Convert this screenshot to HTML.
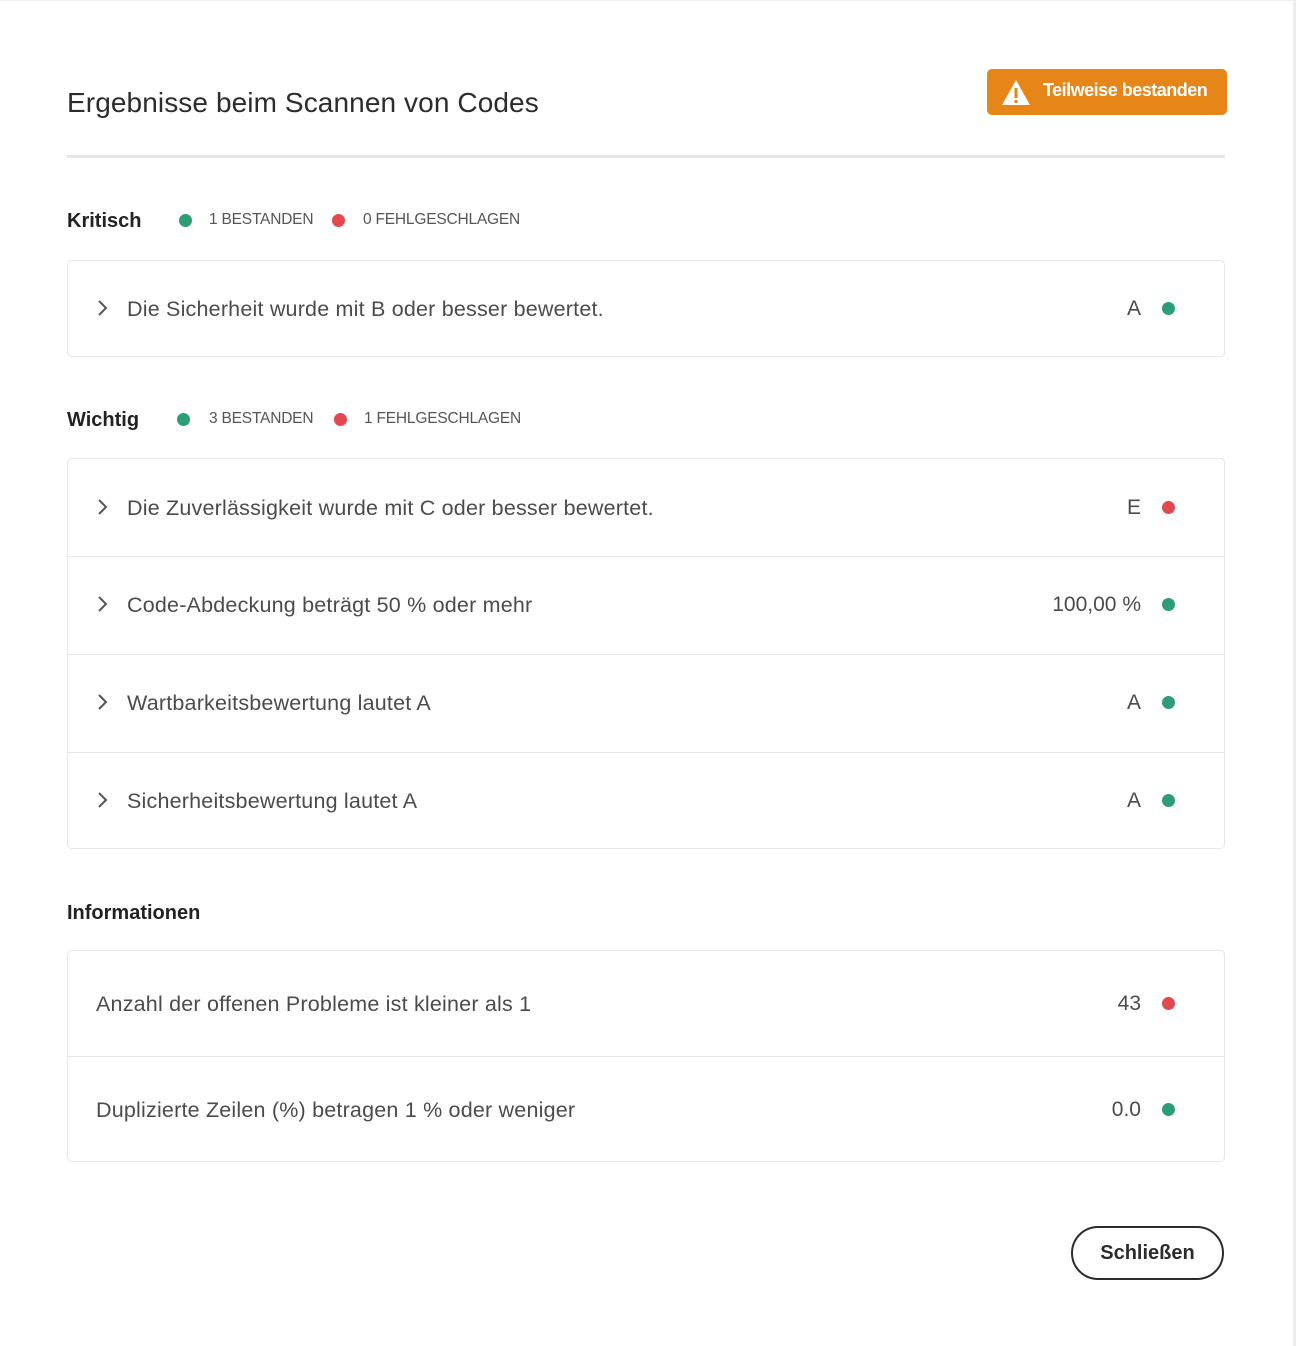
<!DOCTYPE html>
<html><head><meta charset="utf-8"><style>
*{margin:0;padding:0;box-sizing:border-box}
body{width:1296px;height:1346px;background:#fff;position:relative;overflow:hidden;font-family:"Liberation Sans",sans-serif;color:#4b4b4b}
.a{position:absolute}
.frame{position:absolute;left:0;top:0;width:1296px;height:1346px;border-right:3px solid #ececec;border-top:1px solid #f0f0f0}
.title{left:67px;top:87px;font-size:28px;color:#2c2c2c;white-space:nowrap;letter-spacing:0.1px}
.div{left:67px;top:155px;width:1158px;height:3px;background:#e6e6e6}
.badge{left:987px;top:69px;width:240px;height:46px;background:#e68619;border-radius:5px;color:#fff;font-weight:bold;font-size:18px;letter-spacing:-0.5px}
.h{font-size:20px;font-weight:bold;color:#222;white-space:nowrap}
.st{font-size:15.5px;color:#555;white-space:nowrap;letter-spacing:-0.2px}
.dot{position:absolute;width:13px;height:13px;border-radius:50%}
.g{background:#2d9d78}.r{background:#e34850}
.box{position:absolute;left:67px;width:1158px;border:1.5px solid #e6e6e6;border-radius:5px}
.row{position:relative;border-top:1.5px solid #e6e6e6}
.row:first-child{border-top:none}
.row .t{position:absolute;left:59px;font-size:21.5px;white-space:nowrap;color:#4b4b4b;letter-spacing:0.2px}
.row .v{position:absolute;right:83px;font-size:21px;white-space:nowrap}
.row .dot{right:49px}
.chev{position:absolute;left:27px;width:14px;height:18px}
.btn{left:1071px;top:1226px;width:153px;height:54px;border:2.5px solid #2c2c2c;border-radius:27px;font-size:20px;font-weight:bold;color:#2c2c2c;text-align:center;line-height:50px}
</style></head><body>
<div class="frame"></div>
<div class="a title">Ergebnisse beim Scannen von Codes</div>
<div class="a badge">
<svg class="a" style="left:14px;top:10px" width="30" height="27" viewBox="0 0 30 27"><path d="M15 1 L29 26 L1 26 Z" fill="#fff"/><rect x="13.5" y="9" width="3" height="10" fill="#e68619"/><rect x="13.5" y="21" width="3" height="3" fill="#e68619"/></svg>
<span class="a" style="left:56px;top:11px;white-space:nowrap">Teilweise bestanden</span></div>
<div class="a div"></div>

<div class="a h" style="left:67px;top:210px">Kritisch</div>
<div class="dot g" style="left:179px;top:214px"></div>
<div class="a st" style="left:209px;top:211px">1 BESTANDEN</div>
<div class="dot r" style="left:332px;top:214px"></div>
<div class="a st" style="left:363px;top:211px">0 FEHLGESCHLAGEN</div>

<div class="box" style="top:260px">
<div class="row" style="height:95px"><svg class="chev" style="top:38px" viewBox="0 0 14 18"><path d="M4 2 L11 9 L4 16" stroke="#555" stroke-width="2" fill="none"/></svg><span class="t" style="top:36px">Die Sicherheit wurde mit B oder besser bewertet.</span><span class="v" style="top:36px">A</span><span class="dot g" style="top:41px"></span></div>
</div>

<div class="a h" style="left:67px;top:409px">Wichtig</div>
<div class="dot g" style="left:177px;top:413px"></div>
<div class="a st" style="left:209px;top:410px">3 BESTANDEN</div>
<div class="dot r" style="left:334px;top:413px"></div>
<div class="a st" style="left:364px;top:410px">1 FEHLGESCHLAGEN</div>

<div class="box" style="top:458px">
<div class="row" style="height:97px"><svg class="chev" style="top:39px" viewBox="0 0 14 18"><path d="M4 2 L11 9 L4 16" stroke="#555" stroke-width="2" fill="none"/></svg><span class="t" style="top:37px">Die Zuverlässigkeit wurde mit C oder besser bewertet.</span><span class="v" style="top:37px">E</span><span class="dot r" style="top:42px"></span></div>
<div class="row" style="height:98px"><svg class="chev" style="top:38px" viewBox="0 0 14 18"><path d="M4 2 L11 9 L4 16" stroke="#555" stroke-width="2" fill="none"/></svg><span class="t" style="top:36px">Code-Abdeckung beträgt 50 % oder mehr</span><span class="v" style="top:36px">100,00 %</span><span class="dot g" style="top:41px"></span></div>
<div class="row" style="height:98px"><svg class="chev" style="top:38px" viewBox="0 0 14 18"><path d="M4 2 L11 9 L4 16" stroke="#555" stroke-width="2" fill="none"/></svg><span class="t" style="top:36px">Wartbarkeitsbewertung lautet A</span><span class="v" style="top:36px">A</span><span class="dot g" style="top:41px"></span></div>
<div class="row" style="height:96px"><svg class="chev" style="top:38px" viewBox="0 0 14 18"><path d="M4 2 L11 9 L4 16" stroke="#555" stroke-width="2" fill="none"/></svg><span class="t" style="top:36px">Sicherheitsbewertung lautet A</span><span class="v" style="top:36px">A</span><span class="dot g" style="top:41px"></span></div>
</div>

<div class="a h" style="left:67px;top:902px">Informationen</div>

<div class="box" style="top:950px">
<div class="row" style="height:105px"><span class="t" style="left:28px;top:41px">Anzahl der offenen Probleme ist kleiner als 1</span><span class="v" style="top:41px">43</span><span class="dot r" style="top:46px"></span></div>
<div class="row" style="height:105px"><span class="t" style="left:28px;top:41px">Duplizierte Zeilen (%) betragen 1 % oder weniger</span><span class="v" style="top:41px">0.0</span><span class="dot g" style="top:46px"></span></div>
</div>

<div class="a btn">Schließen</div>
</body></html>
